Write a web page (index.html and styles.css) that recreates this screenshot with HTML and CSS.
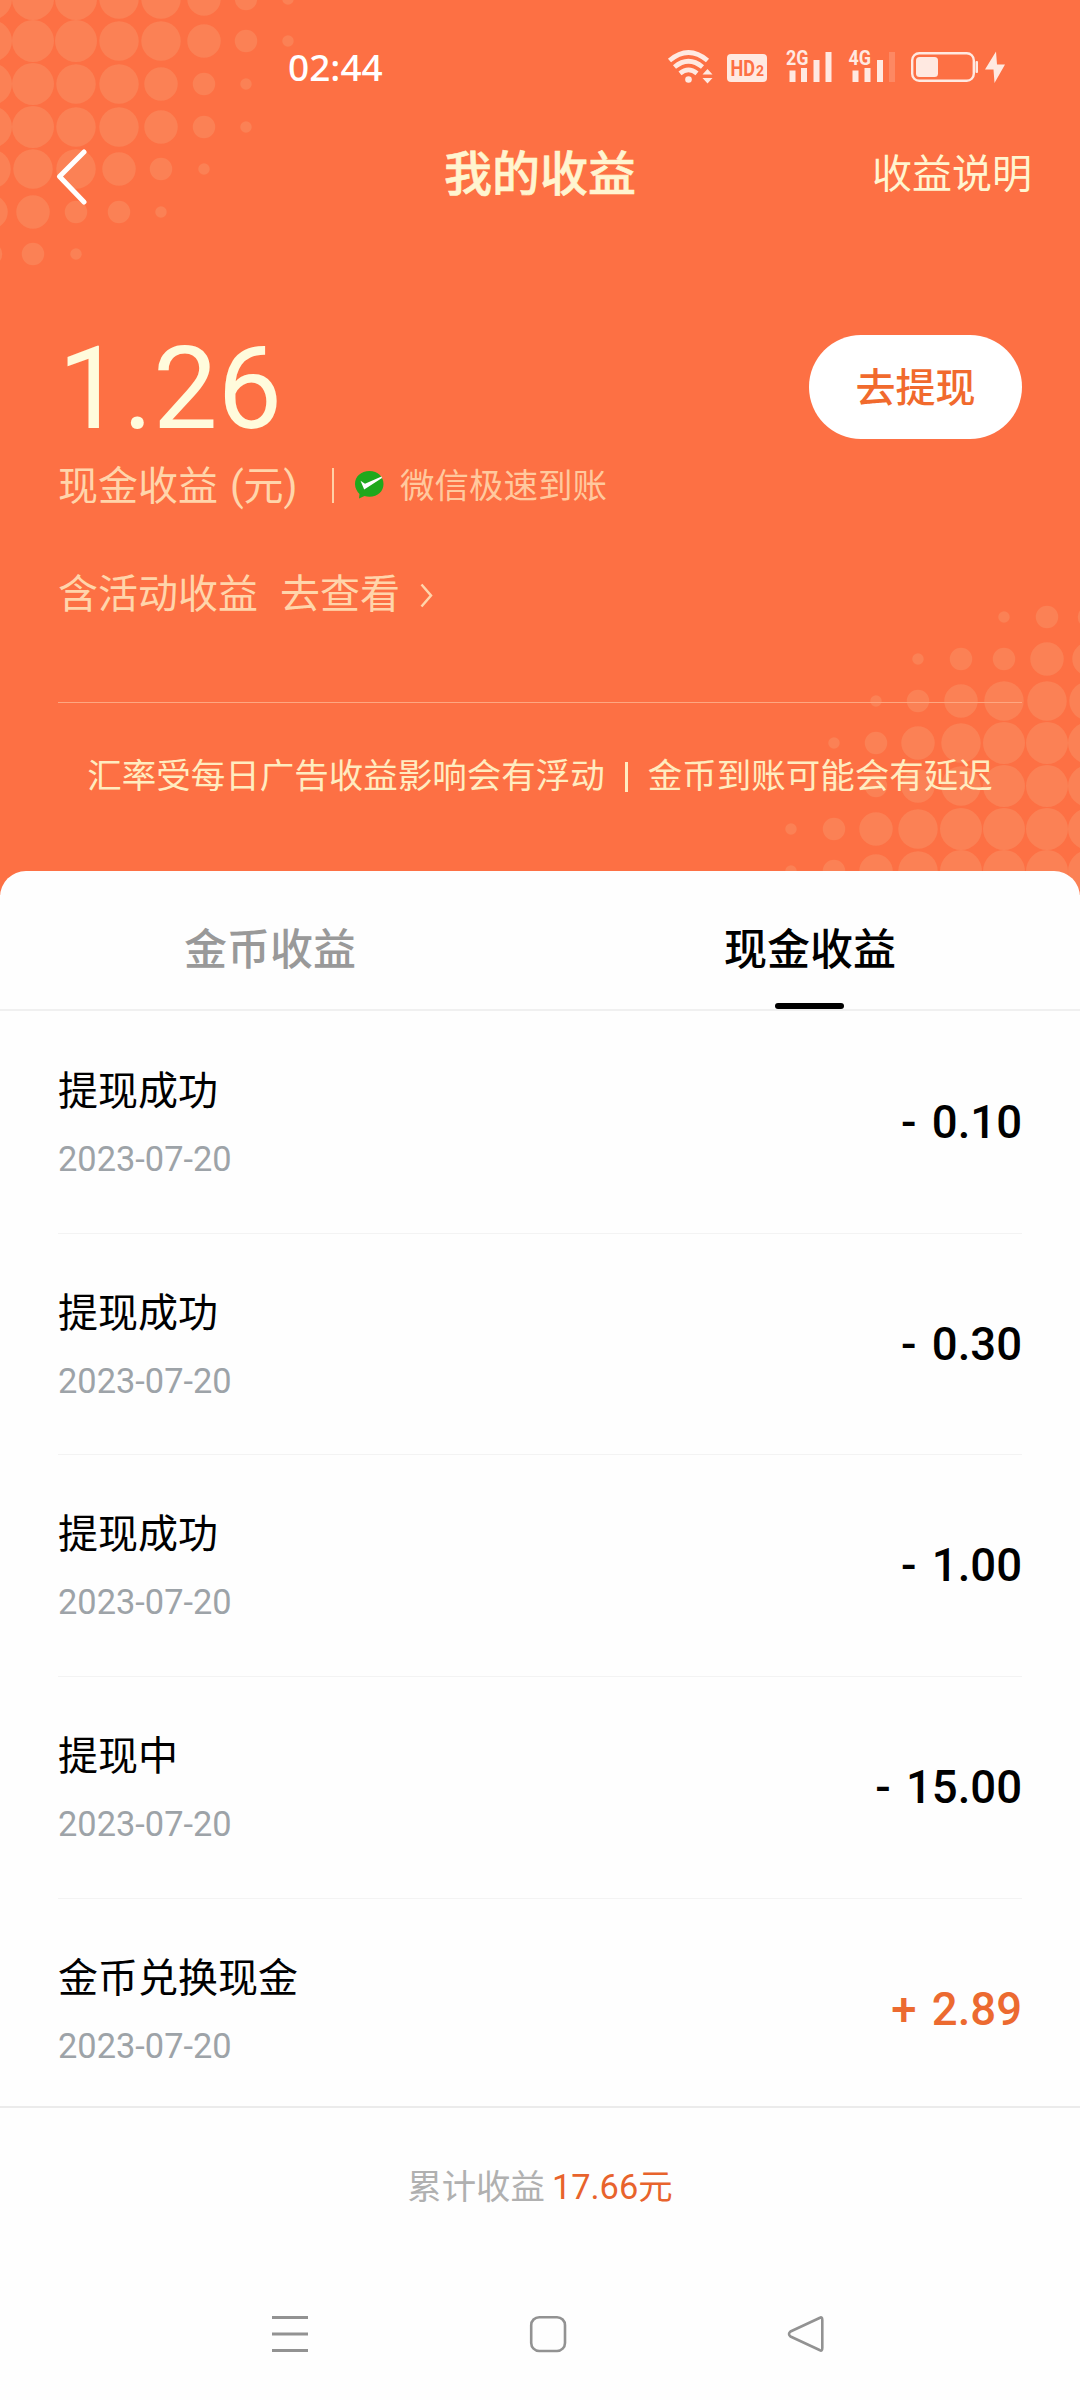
FILE: index.html
```html
<!DOCTYPE html>
<html lang="zh-CN">
<head>
<meta charset="utf-8">
<title>我的收益</title>
<link rel="stylesheet" href="styles.css">
</head>
<body>
<div class="screen">
  <header class="hero">
    <svg class="dots" width="1080" height="900" viewBox="0 0 1080 900">
      <g stroke-linecap="round" stroke="#fb8155" fill="none">
        <path stroke-width="42" d="M-9-1h0M33-1h0M76-1h0M-9 41h0M33 41h0M76 41h0M-9 84h0M33 84h0M-9 127h0M33 127h0M1004 743h0M1047 743h0M1089 743h0M1004 786h0M1047 786h0M1089 786h0M961 829h0M1004 829h0M1047 829h0M1089 829h0M961 871h0M1004 871h0M1047 871h0M1089 871h0"/>
        <path stroke-width="39.5" d="M119-1h0M161-1h0M119 41h0M161 41h0M76 84h0M119 84h0M76 127h0M119 127h0M-9 169h0M33 169h0M76 169h0M1004 701h0M1047 701h0M1089 701h0M961 743h0M961 786h0M918 829h0M918 871h0"/>
        <path stroke-width="33.5" d="M204-1h0M204 41h0M161 84h0M161 127h0M119 169h0M-9 212h0M33 212h0M1047 659h0M1089 659h0M961 701h0M918 743h0M918 786h0M876 829h0M876 871h0"/>
        <path stroke-width="22.5" d="M246-1h0M246 41h0M204 84h0M204 127h0M161 169h0M76 212h0M119 212h0M-9 254h0M33 254h0M1047 617h0M1089 617h0M961 659h0M1004 659h0M918 701h0M876 743h0M876 786h0M834 829h0M834 871h0"/>
        <path stroke-width="11.5" d="M288-1h0M288 41h0M246 84h0M246 127h0M204 169h0M161 212h0M76 254h0M1004 617h0M918 659h0M876 701h0M834 743h0M834 786h0M791 829h0M791 871h0"/>
      </g>
    </svg>

    <div class="status">
      <span class="clock">02:44</span>
      <svg width="342" height="40" viewBox="664 47 342 40" fill="#ffe9e1">
        <g fill="none" stroke="#ffe9e1" stroke-width="4.800">
          <path d="M669.500 60.500Q688.500 44.500 707.500 60.500"/>
          <path d="M674.500 67Q688.500 55.500 702.500 67"/>
          <path d="M680 73.300Q688.500 66.500 697 73.300"/>
        </g>
        <circle cx="688.500" cy="79.500" r="3.300"/>
        <path d="M702.500 74.500l5-5.500 5 5.500zM702.500 78l5 5.500 5-5.500z"/>
        <rect x="727" y="54" width="40" height="28" rx="4"/>
        <text x="730.500" y="76" class="hd" textLength="24.500" lengthAdjust="spacingAndGlyphs">HD<tspan class="hd2"></tspan></text><text x="756" y="76" class="hd2">2</text>
        <text x="786" y="65" class="net" textLength="22.500" lengthAdjust="spacingAndGlyphs">2G</text>
        <path d="M789.500 70.500h6V82h-6zM801 68h6v14h-6zM813.500 60h6v22h-6zM825.500 52h6v30h-6z"/>
        <text x="848.500" y="65" class="net" textLength="22.500" lengthAdjust="spacingAndGlyphs">4G</text>
        <path d="M852.500 70.500h6V82h-6zM864.500 68h6v14h-6zM877 60h6v22h-6z"/>
        <path opacity=".2" d="M889 52h6v30h-6z"/>
        <rect x="912.200" y="53.200" width="61.600" height="27.600" rx="7" fill="none" stroke="#ffe9e1" stroke-width="2.400"/>
        <rect x="916" y="57" width="22" height="20" rx="3.500"/>
        <rect x="975.500" y="61" width="2.500" height="12" rx="1"/>
        <path d="M996 51.500L985 69.500h8.500L994.500 83 1005 64.500h-8z"/>
      </svg>
    </div>

    <nav class="titlebar">
      <svg class="back" width="34" height="60" viewBox="0 0 34 60" fill="none" stroke="#fff" stroke-width="5" stroke-linecap="round" stroke-linejoin="round"><path d="M31 5L6.500 29.500 31 55"/></svg>
      <h1>我的收益</h1>
      <a class="explain">收益说明</a>
    </nav>

    <section class="balance">
      <div class="amount">1.26</div>
      <a class="withdraw">去提现</a>
    </section>
    <div class="caption">
      <span class="cash">现金收益 (元)</span>
      <i class="bar"></i>
      <svg width="31" height="28" viewBox="0 0 31 28"><path fill="#1fa81c" d="M15.500 0C7 0 1 5.500 1 13c0 4 2 7.500 4.500 10L5 27.500l5.500-2.500c1.500.500 3.200.700 5 .700 8.500 0 14-5.500 14-12.700S24 0 15.500 0z"/><path fill="#fff" d="M6.500 9.800l4.500 3L27.500 5.500 28 7 10.200 18.500z"/></svg>
      <span class="wechat">微信极速到账</span>
    </div>
    <div class="activity">
      <span>含活动收益</span><a>去查看</a>
      <svg width="13" height="25" viewBox="0 0 13 25" fill="none" stroke="#ffd5ab" stroke-width="2.500"><path d="M1.500 1.500L11 12.500 1.500 23.500"/></svg>
    </div>
    <div class="notice"><span>汇率受每日广告收益影响会有浮动</span><i></i><span>金币到账可能会有延迟</span></div>
  </header>

  <main class="sheet">
    <div class="tabs">
      <div class="tab">金币收益</div>
      <div class="tab active">现金收益</div>
    </div>
    <ul class="list">
      <li><div><p class="name">提现成功</p><p class="date">2023-07-20</p></div><b>- 0.10</b></li>
      <li><div><p class="name">提现成功</p><p class="date">2023-07-20</p></div><b>- 0.30</b></li>
      <li><div><p class="name">提现成功</p><p class="date">2023-07-20</p></div><b>- 1.00</b></li>
      <li><div><p class="name">提现中</p><p class="date">2023-07-20</p></div><b>- 15.00</b></li>
      <li><div><p class="name">金币兑换现金</p><p class="date">2023-07-20</p></div><b class="plus">+ 2.89</b></li>
    </ul>
  </main>

  <footer class="total"><span>累计收益</span><strong>17.66元</strong></footer>

  <div class="sysnav">
    <svg width="38" height="38" viewBox="0 0 38 38" stroke="#929292" stroke-width="3"><path d="M1 2.500h36M1 19h36M1 35.500h36"/></svg>
    <svg width="38" height="38" viewBox="0 0 38 38" fill="none" stroke="#929292" stroke-width="2.600"><rect x="2.200" y="2.200" width="33.800" height="33.800" rx="8"/></svg>
    <svg width="38" height="38" viewBox="0 0 38 38" fill="none" stroke="#929292" stroke-width="2.600" stroke-linejoin="round"><path d="M32.500 3Q35.300 1 35.300 5V33Q35.300 37 32.500 35L3.500 21.500Q.500 19 3.500 16.500Z"/></svg>
  </div>
</div>
</body>
</html>
```
FILE: styles.css
```css
* { box-sizing: border-box; margin: 0; padding: 0; }
body { background: #fff; font-family: Roboto, "Noto Sans CJK SC", sans-serif; color: #000; }
.screen { width: 1080px; height: 2400px; overflow: hidden; display: flex; flex-direction: column; background: #fefefe; }

/* Orange header */
.hero { height: 895px; flex: none; background: #fd7044; position: relative; color: #fff5d0; display: flex; flex-direction: column; }
.dots { position: absolute; left: 0; top: 0; }
.hero > :not(.dots) { position: relative; }
.status { height: 134px; padding: 47px 74px 0 288px; display: flex; justify-content: space-between; align-items: flex-start; }
.clock { font: 500 37px/40px "Noto Sans", sans-serif; color: #fff; }
.hd { font: 700 22.500px Roboto, sans-serif; fill: #fd7044; }
.hd2 { font: 700 14px Roboto, sans-serif; fill: #fd7044; }
.net { font: 700 20.500px Roboto, sans-serif; }

.titlebar { height: 80px; padding: 0 48px 0 53px; display: grid; grid-template-columns: 1fr auto 1fr; align-items: center; }
.back { margin-top: 5px; }
h1 { font-size: 48px; font-weight: 500; line-height: 80px; margin: 1px 5px 0 0; -webkit-text-stroke: .6px; }
.explain { font-size: 40px; justify-self: end; margin-top: -7px; }

.balance { margin-top: 107px; height: 128px; padding: 0 58px; display: flex; justify-content: space-between; align-items: flex-start; }
.amount { font-size: 115px; line-height: 136px; color: #fffbdc; }
.withdraw { margin-top: 14px; width: 213px; height: 104px; border-radius: 52px; background: #fff; color: #f16a2d; font-size: 40px; font-weight: 500; line-height: 107px; text-align: center; }
.caption { height: 72px; padding-left: 58px; display: flex; align-items: center; color: #ffd5ab; }
.cash { font-size: 40px; width: 274px; white-space: nowrap; margin-top: -4px; word-spacing: 2px; }
.bar { width: 2px; height: 35px; background: #ffd0a6; margin-right: 20px; }
.wechat { font-size: 34.500px; margin: -4px 0 0 15px; color: #ffc99e; }
.activity { margin-top: 34px; height: 72px; padding-left: 58px; display: flex; align-items: center; font-size: 40px; color: #ffd5ab; }
.activity a { margin: 0 20px 0 22px; }
.activity svg { margin-top: 9px; }
.notice { margin: 75px 58px 0; border-top: 1px solid #fea781; padding-top: 45px; display: flex; justify-content: center; align-items: center; font-size: 34.500px; line-height: 56px; color: #ffecc0; white-space: nowrap; }
.notice i { width: 3px; height: 30px; margin: 2px 20px 0; background: #ffecc0; }

/* Records */
.sheet { position: relative; margin-top: -24px; height: 1237px; flex: none; background: #fefefe; border-radius: 26px 26px 0 0; border-bottom: 2px solid #ebebeb; }
.tabs { height: 140px; display: flex; border-bottom: 2px solid #f0f0f0; }
.tab { flex: 1; text-align: center; font-size: 43px; font-weight: 500; line-height: 159px; color: #999; position: relative; }
.active { color: #000; }
.active::after { content: ""; position: absolute; left: 235px; bottom: 0; width: 69px; height: 6px; border-radius: 3px; background: #000; }
.list { list-style: none; padding: 1px 58px 0; }
li { height: 221.700px; display: flex; justify-content: space-between; align-items: center; border-bottom: 1px solid #f3f3f3; }
li:last-child { border: 0; }
.name { font-size: 40px; line-height: 56px; }
.date { font-size: 34.400px; line-height: 44px; margin-top: 17px; color: #9da3a8; }
li b { font-size: 45.500px; font-weight: 500; word-spacing: 4px; }
.plus { color: #ec6a30; }

.total { height: 152px; display: flex; justify-content: center; align-items: center; font-size: 34.400px; color: #b0b0b0; }
.total strong { font-weight: 400; color: #e8632c; margin-left: 7px; }

.sysnav { margin-top: 55px; padding: 0 255px 0 271px; display: flex; justify-content: space-between; }
```
